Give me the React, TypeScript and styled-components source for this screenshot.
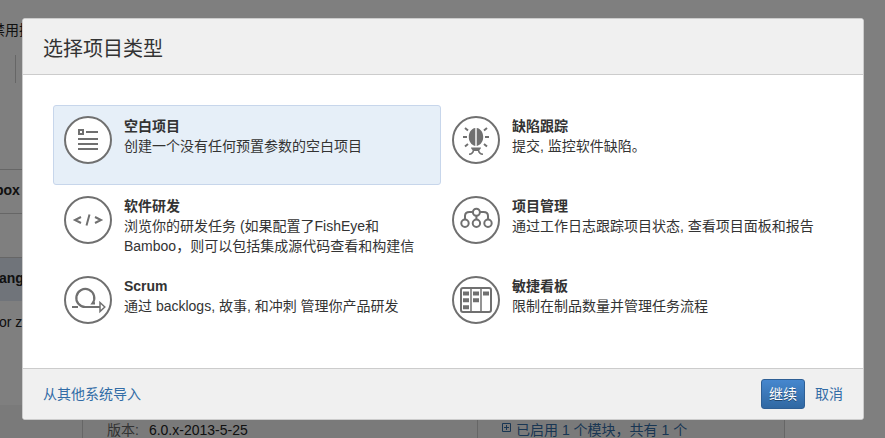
import React, { useState } from "react";
import styled, { createGlobalStyle } from "styled-components";

const GlobalStyle = createGlobalStyle`
  * { box-sizing: border-box; }
  html, body { margin: 0; height: 100%; overflow: hidden; }
  body {
    background: #fff;
    color: #333;
    font: 14px/20px "Liberation Sans", "Noto Sans CJK SC", sans-serif;
  }
`;

const Page = styled.div`
  height: 100vh;
  overflow: hidden;
  color: #222;
  white-space: nowrap;
`;

const Tabs = styled.div`
  height: 55px;
  padding-top: 20px;
  margin-left: -9px;
`;

const Toolbar = styled.div`
  width: 16px;
  height: 28px;
  border-right: 1px solid #ccc;
  margin-bottom: 86px;
`;

const Row = styled.div<{ $selected?: boolean; $strong?: boolean; $plain?: boolean; $shift?: number }>`
  height: 44px;
  margin-right: 40px;
  padding: 10px 0;
  border-top: 1px solid ${(p) => (p.$plain ? "transparent" : "#ccc")};
  background: ${(p) => (p.$selected ? "#e0e8f5" : "transparent")};
  font-weight: ${(p) => (p.$strong ? 700 : 400)};
  text-indent: ${(p) => p.$shift ?? 0}px;
`;

const Details = styled.div`
  display: grid;
  grid-template-columns: 83px 395px 307px 1fr;
  height: 60px;
  margin-top: 16px;
`;

const DetailCell = styled.div`
  display: flex;
  align-items: flex-start;
  gap: 10px;
  padding: 15px 24px;
  background: #f5f5f5;
  border-right: 1px solid #ccc;
  &:last-child {
    background: none;
    border-right: 0;
  }
`;

const Term = styled.span`
  color: #666;
`;

const ModuleLink = styled.a`
  display: flex;
  gap: 5px;
  color: #326ca6;
  text-decoration: none;
  svg { margin-top: 3px; }
`;

const Overlay = styled.div`
  position: fixed;
  inset: 0;
  padding: 18px 21px 18px 22px;
  background: rgba(0, 0, 0, 0.5);
`;

const Dialog = styled.section`
  border: 1px solid #ccc;
  border-radius: 3px;
  background: #fff;
  overflow: hidden;
`;

const Header = styled.header`
  padding: 17px 20px 11px;
  background: #f0f0f0;
  border-bottom: 1px solid #ccc;
`;

const Title = styled.h1`
  margin: 0;
  font-size: 20px;
  line-height: 27px;
  font-weight: 400;
`;

const Types = styled.div`
  display: grid;
  grid-template-columns: 1fr 1fr;
  grid-auto-rows: 80px;
  padding: 30px 34px 23px 30px;
`;

const TypeButton = styled.button<{ $selected: boolean }>`
  display: flex;
  align-items: flex-start;
  gap: 12px;
  padding: 10px;
  border: 1px solid ${(p) => (p.$selected ? "#c7d6eb" : "transparent")};
  border-radius: 3px;
  background: ${(p) => (p.$selected ? "#e6eff8" : "transparent")};
  color: inherit;
  font: inherit;
  text-align: left;
  overflow: hidden;
  cursor: pointer;
`;

const TypeIcon = styled.svg`
  flex: none;
  width: 48px;
  height: 48px;
`;

const TypeText = styled.span`
  display: block;
`;

const TypeName = styled.strong`
  display: block;
`;

const Footer = styled.footer`
  display: flex;
  align-items: center;
  padding: 10px 20px;
  border-top: 1px solid #ccc;
  background: #f0f0f0;
`;

const TextLink = styled.a`
  color: #326ca6;
  text-decoration: none;
`;

const Continue = styled.button`
  margin: 0 10px 0 auto;
  height: 30px;
  padding: 0 7px;
  border: 1px solid #2e5f95;
  border-radius: 3px;
  background: linear-gradient(#4687ce, #3068a2);
  color: #fff;
  font: inherit;
  text-shadow: 0 1px 0 rgba(0, 0, 0, 0.4);
  cursor: pointer;
`;

const BlankIcon = () => (
  <path
    d="M15 14h4v4h-4zM22 16h12M14 23h20M14 28h20M14 33h20"
    fill="none"
    stroke="#707070"
    strokeWidth="2"
  />
);

const BugIcon = () => (
  <g>
    <path
      d="M23.300 12c-4 .5-6.500 4.500-6.500 9s2.500 8 6.500 9zM24.700 12c4 .5 6.500 4.500 6.500 9s-2.500 8-6.500 9zM19 31.500h10c0 1.500-1.500 2-2 3.500h-6c-.5-1.500-2-2-2-3.500z"
      fill="#707070"
    />
    <path
      d="M13 12l3 2.500M35 12l-3 2.500M11 21h4M37 21h-4M13 30.500l3-2.500M35 30.500l-3-2.500"
      fill="none"
      stroke="#707070"
      strokeWidth="2"
    />
    <path
      d="M21.500 34.500c-.5 2.500-1.500 3.500-4.500 3.800M26.500 34.500c.5 2.500 1.500 3.500 4.500 3.800"
      fill="none"
      stroke="#707070"
      strokeWidth="1.500"
    />
  </g>
);

const CodeIcon = () => (
  <path
    d="M17 21l-6 3 6 3M31 21l6 3-6 3M25.500 18.500l-3 11"
    fill="none"
    stroke="#707070"
    strokeWidth="2"
  />
);

const TreeIcon = () => (
  <g fill="none" stroke="#707070" strokeWidth="2">
    <circle cx="24.400" cy="16.300" r="3.500" />
    <circle cx="13" cy="27.300" r="3.700" />
    <circle cx="24.400" cy="27.300" r="3.700" />
    <circle cx="36" cy="27.300" r="3.700" />
    <path d="M21 16h-3.500c-3 0-4.500 1.500-4.500 4v3.500M28 16h3.500c3 0 4.500 1.500 4.500 4v3.500M24.400 20v3.500" />
  </g>
);

const ScrumIcon = () => (
  <g fill="none" stroke="#707070">
    <path d="M8 31h6M36 31H21.500a9 9 0 1 1 7-3.600h2.500" strokeWidth="2.200" />
    <path d="M36 26.500l4.800 4.500-4.800 4.500z" fill="#fff" strokeWidth="1.500" />
  </g>
);

const BoardIcon = () => (
  <g>
    <rect x="9" y="12" width="30" height="24" rx="2" fill="none" stroke="#707070" strokeWidth="2" />
    <path d="M19 12v24M29 12v24" stroke="#707070" strokeWidth="1.500" />
    <path
      d="M11 15.500h6v4h-6zM11 22.300h6v4h-6zM11 29.300h6v4h-6zM21 15.500h6v4h-6zM21 22.300h6v4h-6zM31 15.500h6v4h-6z"
      fill="#707070"
    />
  </g>
);

const projectTypes = [
  { name: "空白项目", text: "创建一个没有任何预置参数的空白项目", Icon: BlankIcon },
  { name: "缺陷跟踪", text: "提交, 监控软件缺陷。", Icon: BugIcon },
  {
    name: "软件研发",
    text: "浏览你的研发任务 (如果配置了FishEye和Bamboo，则可以包括集成源代码查看和构建信",
    Icon: CodeIcon,
  },
  { name: "项目管理", text: "通过工作日志跟踪项目状态, 查看项目面板和报告", Icon: TreeIcon },
  { name: "Scrum", text: "通过 backlogs, 故事, 和冲刺 管理你产品研发", Icon: ScrumIcon },
  { name: "敏捷看板", text: "限制在制品数量并管理任务流程", Icon: BoardIcon },
];

export default function App() {
  const [selected, setSelected] = useState(0);
  return (
    <>
      <GlobalStyle />
      <Page aria-hidden="true">
        <Tabs>禁用插</Tabs>
        <Toolbar />
        <Row $strong $shift={-5}>box</Row>
        <Row />
        <Row $selected $strong $shift={-1}>ang</Row>
        <Row $plain $shift={-1}>or z</Row>
        <Row $plain />
        <Details>
          <DetailCell />
          <DetailCell>
            <Term>版本:</Term>
            <span>6.0.x-2013-5-25</span>
          </DetailCell>
          <DetailCell>
            <ModuleLink href="#modules" tabIndex={-1}>
              <svg width="9" height="9" viewBox="0 0 9 9" fill="none" stroke="#326ca6">
                <path d="M.5.5h8v8h-8zM2 4.500h5M4.500 2v5" />
              </svg>
              已启用 1 个模块，共有 1 个
            </ModuleLink>
          </DetailCell>
          <DetailCell />
        </Details>
      </Page>
      <Overlay>
        <Dialog role="dialog" aria-modal="true" aria-labelledby="dialog-title">
          <Header>
            <Title id="dialog-title">选择项目类型</Title>
          </Header>
          <Types>
            {projectTypes.map(({ name, text, Icon }, i) => (
              <TypeButton
                key={name}
                type="button"
                $selected={i === selected}
                aria-pressed={i === selected}
                onClick={() => setSelected(i)}
              >
                <TypeIcon viewBox="0 0 48 48" aria-hidden="true">
                  <circle cx="24" cy="24" r="23" fill="#fff" stroke="#707070" strokeWidth="2" />
                  <Icon />
                </TypeIcon>
                <TypeText>
                  <TypeName>{name}</TypeName>
                  {text}
                </TypeText>
              </TypeButton>
            ))}
          </Types>
          <Footer>
            <TextLink href="#import">从其他系统导入</TextLink>
            <Continue type="button">继续</Continue>
            <TextLink href="#cancel">取消</TextLink>
          </Footer>
        </Dialog>
      </Overlay>
    </>
  );
}
